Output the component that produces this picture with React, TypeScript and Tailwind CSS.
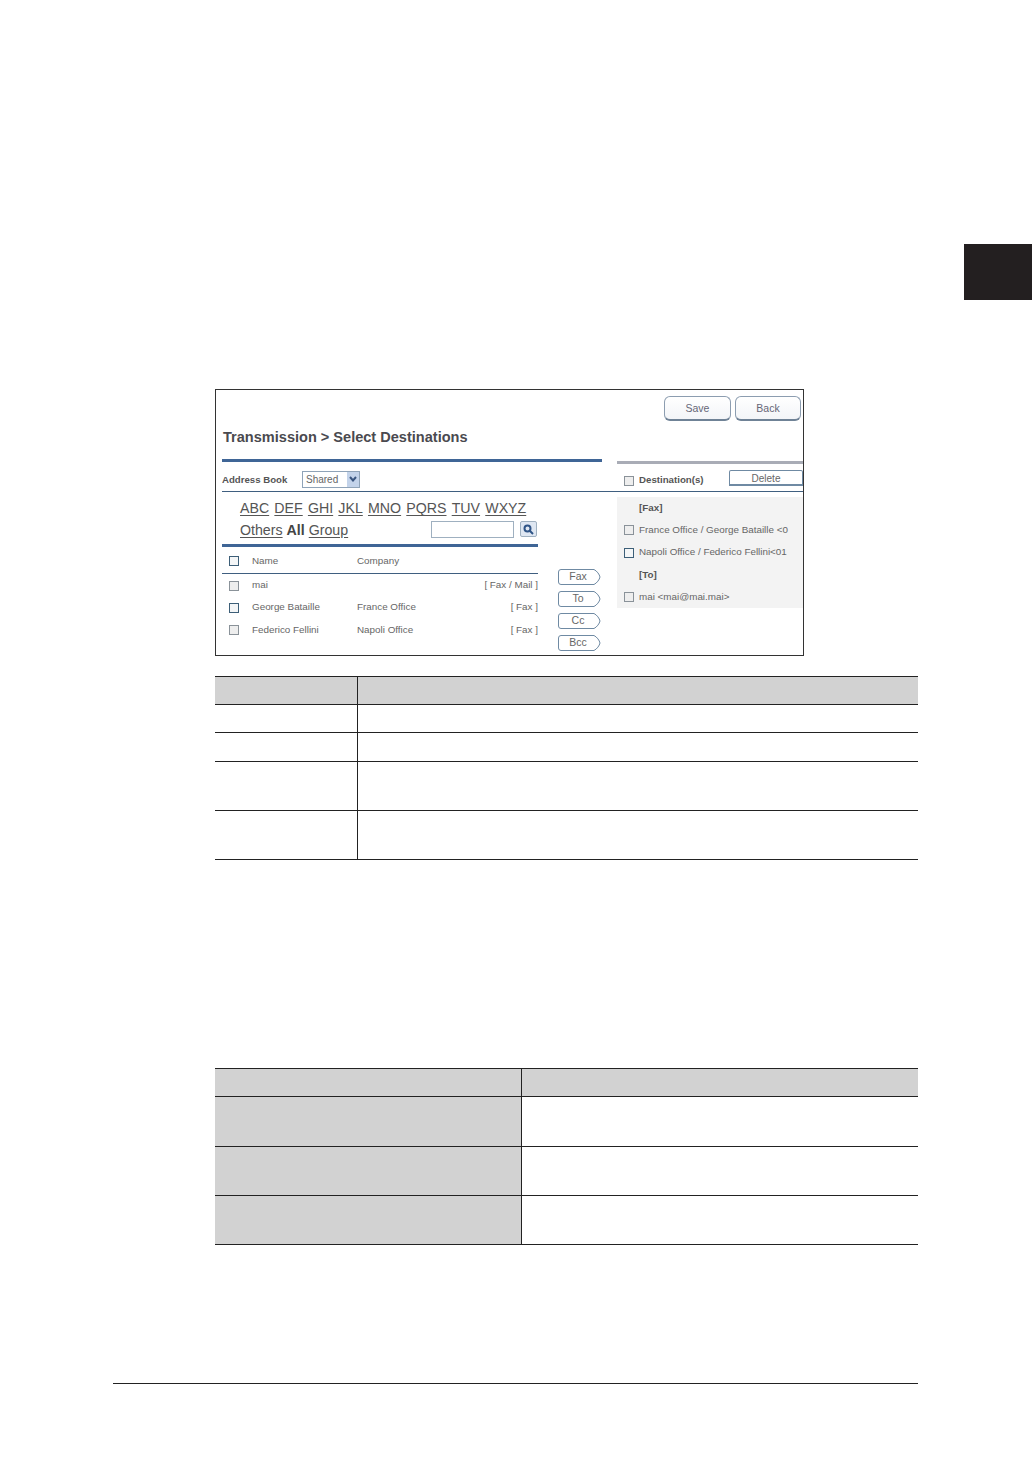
const letters = ["ABC", "DEF", "GHI", "JKL", "MNO", "PQRS", "TUV", "WXYZ"];

const people = [
  { name: "mai", company: "", type: "[ Fax / Mail ]", h: "h-[22px] pt-[1px]", box: "border-[#8a9299] bg-[#eeeeee]" },
  { name: "George Bataille", company: "France Office", type: "[ Fax ]", h: "h-[23px]", box: "border-[#3d5f78] bg-[#f4f6f7]" },
  { name: "Federico Fellini", company: "Napoli Office", type: "[ Fax ]", h: "h-[22px]", box: "border-[#8a9299] bg-[#eeeeee]" },
];

function Check({ className = "border-[#8a9299] bg-[#eeeeee]" }: { className?: string }) {
  return <div className={`w-[10px] h-[10px] border shrink-0 ${className}`} />;
}

function ArrowButton({ label }: { label: string }) {
  return (
    <div className="relative w-[43px] h-[16px] flex items-center justify-center pr-[3px] text-[10.5px] text-[#666]">
      <svg className="absolute inset-0" width="43" height="16" viewBox="0 0 43 16" fill="none">
        <path d="M3 .5H36C39 2 41.5 5.5 42 8C41.5 10.5 39 14 36 15.5H3Q.5 15.5 .5 13V3Q.5 .5 3 .5Z" fill="#fff" stroke="#6f8aa3" />
      </svg>
      <span className="relative">{label}</span>
    </div>
  );
}

function TopButton({ label, width }: { label: string; width: string }) {
  return (
    <div className={`${width} h-[25px] pt-[2px] rounded-[6px] border border-[#8c9db0] border-b-2 border-b-[#6f8296] bg-gradient-to-b from-white to-[#f3f5f8] flex items-center justify-center text-[10.5px] text-[#667]`}>
      {label}
    </div>
  );
}

function DestRow({ label, check, bold, box }: { label: string; check?: boolean; bold?: boolean; box?: string }) {
  return (
    <div className="h-[22.3px] flex items-center pl-[7px]">
      <div className="w-[15px] shrink-0">{check && <Check className={box} />}</div>
      <span className={`text-[9.85px] whitespace-nowrap ${bold ? "font-bold text-[#555]" : "text-[#666]"}`}>{label}</span>
    </div>
  );
}

function DocTable({ col, rows, shaded }: { col: string; rows: string[]; shaded?: boolean }) {
  return (
    <div className="ml-[215px] w-[703px] border-t border-[#222]">
      {rows.map((h, i) => (
        <div key={i} className={`flex border-b border-[#222] ${h} ${i === 0 ? "bg-[#d2d2d2]" : ""}`}>
          <div className={`${col} border-r border-[#222] ${shaded ? "bg-[#d2d2d2]" : ""}`} />
          <div className="flex-1" />
        </div>
      ))}
    </div>
  );
}

export default function App() {
  return (
    <div className="w-[1032px] h-[1457px] bg-white flex flex-col overflow-hidden font-['Liberation_Sans',Arial,sans-serif]">
      {/* chapter tab */}
      <div className="self-end mt-[244px] w-[68px] h-[56px] bg-[#231f20]" />

      {/* screenshot of the web page */}
      <div className="ml-[215px] mt-[89px] w-[589px] h-[267px] border border-[#333] flex flex-col pl-[6px] overflow-hidden">
        <div className="flex justify-end gap-[4px] pr-[2px] mt-[6px]">
          <TopButton label="Save" width="w-[67px]" />
          <TopButton label="Back" width="w-[66px]" />
        </div>
        <div className="mt-[7px] h-[20px] flex items-center pl-[1px] text-[14.55px] font-bold text-[#4a4a4f] whitespace-nowrap">
          Transmission &gt; Select Destinations
        </div>

        <div className="flex mt-[11px]">
          <div className="w-[380px] h-[3px] bg-[#3f6596]" />
          <div className="ml-[15px] mt-[2px] flex-1 h-[3px] bg-[#a9acb6]" />
        </div>

        <div className="flex h-[28px] border-b border-[#3f5f80]">
          <div className="w-[395px] flex items-center pt-[6px]">
            <span className="w-[80px] text-[9.65px] font-bold text-[#555]">Address Book</span>
            <div className="w-[58px] h-[17px] border border-[#8fa3b8] flex items-center justify-between pl-[3px] -mt-[3px] text-[10px] text-[#666]">
              Shared
              <div className="w-[12px] h-full bg-[#c3d3ea] flex items-center justify-center">
                <svg width="8" height="6" viewBox="0 0 8 6" fill="none" stroke="#3a5680" strokeWidth="2">
                  <path d="M1 1L4 4.5L7 1" />
                </svg>
              </div>
            </div>
          </div>
          <div className="flex-1 flex items-center pl-[7px] pt-[6px]">
            <Check />
            <span className="ml-[5px] w-[90px] text-[9.7px] font-bold text-[#555] whitespace-nowrap">Destination(s)</span>
            <div className="-mt-[5px] w-[74px] h-[16px] pt-[1px] rounded-t-[2px] border border-b-2 border-[#6f8aa3] flex items-center justify-center text-[10px] text-[#666]">
              Delete
            </div>
          </div>
        </div>

        <div className="flex flex-1">
          <div className="w-[316px]">
            <div className="mt-[7px] pl-[18px] h-[20px] flex items-center gap-[5.2px] text-[14.2px] text-[#555]">
              {letters.map((l) => (
                <span key={l} className="underline underline-offset-2">{l}</span>
              ))}
            </div>
            <div className="mt-[2px] pl-[18px] h-[20px] flex items-center text-[14.2px] text-[#555]">
              <span className="underline underline-offset-2">Others</span>
              <span className="ml-[4px] font-bold text-[#444]">All</span>
              <span className="ml-[4px] underline underline-offset-2">Group</span>
              <div className="ml-auto -mt-[4px] w-[83px] h-[17px] border border-[#9fb0c0]" />
              <div className="ml-[6px] mr-[1px] -mt-[4px] w-[17px] h-[16px] rounded-[2px] border border-[#9fb0c0] bg-[#dfe7f2] flex items-center justify-center">
                <svg width="11" height="11" viewBox="0 0 11 11" fill="none" stroke="#2f5487" strokeWidth="2">
                  <circle cx="4.5" cy="4.5" r="3" />
                  <path d="M7 7L10 10" />
                </svg>
              </div>
            </div>
            <div className="mt-[3px] h-[3px] bg-[#3f6596]" />
            <div className="h-[27px] pt-[2px] flex items-center border-b border-[#3f5f80] pl-[7px] text-[9.85px] text-[#666]">
              <Check className="border-[#3d5f78] bg-[#f4f6f7]" />
              <span className="ml-[13px] w-[105px]">Name</span>
              <span>Company</span>
            </div>
            {people.map((p) => (
              <div key={p.name} className={`${p.h} flex items-center pl-[7px] text-[9.85px] text-[#666]`}>
                <Check className={p.box} />
                <span className="ml-[13px] w-[105px] whitespace-nowrap">{p.name}</span>
                <span>{p.company}</span>
                <span className="ml-auto">{p.type}</span>
              </div>
            ))}
          </div>

          <div className="ml-[20px] mt-[77px] w-[43px] flex flex-col gap-[6px]">
            <ArrowButton label="Fax" />
            <ArrowButton label="To" />
            <ArrowButton label="Cc" />
            <ArrowButton label="Bcc" />
          </div>

          <div className="ml-[16px] mt-[5px] w-[186px] h-[111px] bg-[#f3f3f3] overflow-hidden">
            <DestRow label="[Fax]" bold />
            <DestRow label="France Office / George Bataille <0" check />
            <DestRow label="Napoli Office / Federico Fellini<01" check box="border-[#3d5f78] bg-[#f4f6f7]" />
            <DestRow label="[To]" bold />
            <DestRow label="mai <mai@mai.mai>" check />
          </div>
        </div>
      </div>

      <div className="mt-[20px]">
        <DocTable col="w-[143px]" rows={["h-[28px]", "h-[28px]", "h-[29px]", "h-[49px]", "h-[49px]"]} />
      </div>
      <div className="mt-[208px]">
        <DocTable col="w-[307px]" shaded rows={["h-[28px]", "h-[50px]", "h-[49px]", "h-[49px]"]} />
      </div>

      {/* footer rule */}
      <div className="ml-[113px] mt-[138px] w-[805px] h-px bg-[#222]" />
    </div>
  );
}
